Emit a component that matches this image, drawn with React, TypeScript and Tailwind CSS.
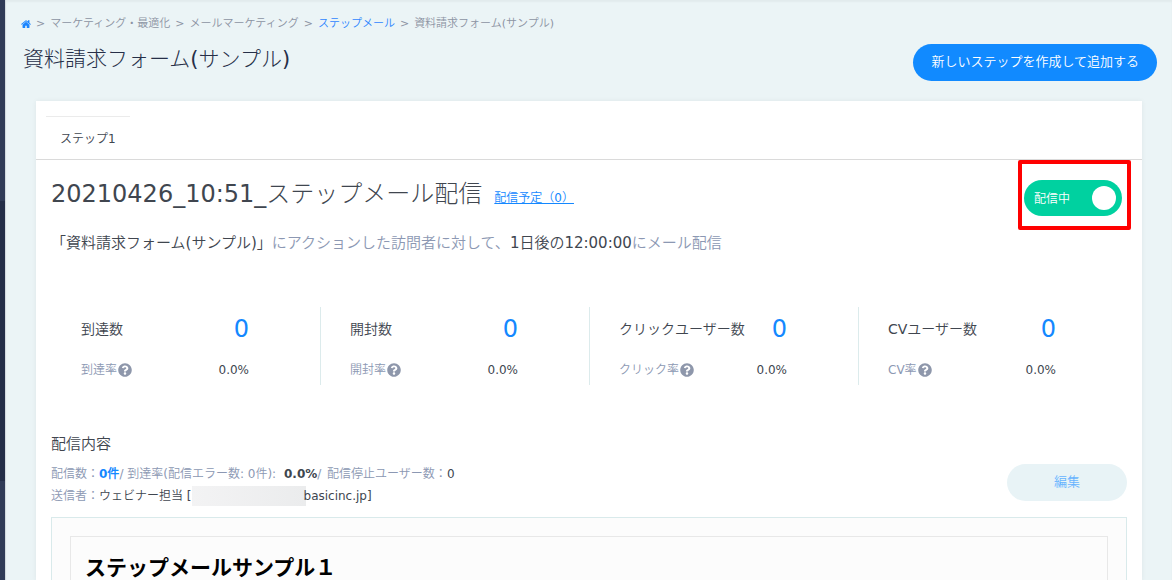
import { useState } from "react";
import { FaQuestionCircle } from "react-icons/fa";

const stats = [
  { label: "到達数", count: 0, rateLabel: "到達率", rate: "0.0%" },
  { label: "開封数", count: 0, rateLabel: "開封率", rate: "0.0%" },
  { label: "クリックユーザー数", count: 0, rateLabel: "クリック率", rate: "0.0%" },
  { label: "CVユーザー数", count: 0, rateLabel: "CV率", rate: "0.0%" },
];

function Breadcrumb() {
  return (
    <nav aria-label="パンくず" className="flex items-center gap-[5px] pl-[15px] text-[11px] leading-4 text-[#8b93a3]">
      <a href="#" aria-label="ホーム" className="text-[#1a85ff]">
        <svg viewBox="0 0 1664 1312" className="h-2 w-2.5" fill="currentColor" aria-hidden="true">
          <path d="M1408 768v480q0 26-19 45t-45 19h-384v-384h-256v384h-384q-26 0-45-19t-19-45v-480q0-1 .5-3t.5-3l575-474 575 474q1 2 1 6zM1631 699l-62 74q-8 9-21 11h-3q-13 0-21-7l-692-577-692 577q-12 8-24 7-13-2-21-11l-62-74q-8-10-7-23.500t11-21.500l719-599q32-26 76-26t76 26l244 204v-195q0-14 9-23t23-9h192q14 0 23 9t9 23v408l219 182q10 8 11 21.500t-7 23.500z" />
        </svg>
      </a>
      <span>&gt;</span>
      <a href="#">マーケティング・最適化</a>
      <span>&gt;</span>
      <a href="#">メールマーケティング</a>
      <span>&gt;</span>
      <a href="#" className="text-[#2f86ff]">ステップメール</a>
      <span>&gt;</span>
      <span>資料請求フォーム(サンプル)</span>
    </nav>
  );
}

function DeliveryToggle() {
  const [on, setOn] = useState(true);
  return (
    <div className="relative mt-1 mr-[5px]">
      <label className="flex h-9 w-[98px] cursor-pointer items-center justify-between rounded-full bg-[#00d1a0] pr-1.5 pl-2.5 text-xs text-white">
        <input type="checkbox" role="switch" className="sr-only" checked={on} onChange={() => setOn(!on)} />
        <span className="pt-0.5">配信中</span>
        <span className="size-6 rounded-full bg-white" />
      </label>
      <div className="pointer-events-none absolute -top-5 -right-[9px] -bottom-[14px] -left-1.5 rounded-xs border-4 border-[#ff0000]" />
    </div>
  );
}

function Stats() {
  return (
    <div className="mt-[52px] grid grid-cols-4">
      {stats.map((s) => (
        <div key={s.label} className="border-l border-[#dcebec] pt-2 pr-[71px] pb-[5px] pl-[29px] first:border-transparent">
          <div className="flex items-center justify-between text-sm leading-7">
            <span className="whitespace-nowrap">{s.label}</span>
            <span className="text-2xl leading-7 text-[#1488ff]">{s.count}</span>
          </div>
          <div className="mt-[17px] flex items-center justify-between text-xs leading-5">
            <span className="flex items-center gap-px text-[#8c98b3]">
              {s.rateLabel}
              <FaQuestionCircle size={14} className="text-[#8e97ab]" />
            </span>
            <span>{s.rate}</span>
          </div>
        </div>
      ))}
    </div>
  );
}

export default function App() {
  return (
    <div className="flex h-screen overflow-hidden bg-[#ebf4f6] font-['DejaVu_Sans','Noto_Sans_CJK_JP_DemiLight','Noto_Sans_CJK_JP',sans-serif] text-[#40464f]">
      <aside className="flex w-1.5 shrink-0 flex-col border-r border-[#d3dadf] bg-[#242e48]">
        <div className="h-[201px] bg-[#303b57]" />
        <div className="mt-auto h-[99px] bg-[#303b57]" />
      </aside>
      <main className="flex min-w-0 flex-1 flex-col pt-4 shadow-[inset_0_2px_2px_rgba(0,0,0,0.04)]">
        <Breadcrumb />
        <header className="mt-3 flex items-start justify-between pr-[15px] pl-[17px]">
          <h1 className="font-['DejaVu_Sans','Noto_Sans_CJK_JP_Light','Noto_Sans_CJK_JP',sans-serif] text-[21px] leading-[30px] text-[#262f48]">
            資料請求フォーム(サンプル)
          </h1>
          <button className="h-[37px] rounded-full bg-[#118aff] px-[18px] pb-0.5 text-[13px] text-white">
            新しいステップを作成して追加する
          </button>
        </header>
        <section className="mx-[30px] mt-5 flex flex-1 flex-col bg-white shadow-[0_0_5px_rgba(0,0,0,0.06)]">
          <div className="flex border-b border-[#dadada] px-2.5 pt-[15px]">
            <button className="border-t border-[#ebebeb] px-3.5 pt-0.5 text-xs leading-10">ステップ1</button>
          </div>
          <div className="flex flex-1 flex-col px-[15px] pt-4">
            <div className="flex items-start justify-between">
              <div className="flex items-baseline gap-3">
                <h2 className="font-['DejaVu_Sans','Noto_Sans_CJK_JP_Light','Noto_Sans_CJK_JP',sans-serif] text-2xl leading-9">
                  20210426_10:51_ステップメール配信
                </h2>
                <a href="#" className="text-xs text-[#1488ff] underline">配信予定（0）</a>
              </div>
              <DeliveryToggle />
            </div>
            <p className="mt-[15px] text-[15px] leading-6 text-[#8c98b3]">
              <span className="text-[#40464f]">「資料請求フォーム(サンプル)」</span>にアクションした訪問者に対して、
              <span className="text-[#40464f]">1日後の12:00:00</span>にメール配信
            </p>
            <Stats />
            <h3 className="mt-[49px] text-[15px] leading-5">配信内容</h3>
            <div className="mt-2 flex items-start justify-between">
              <div className="pt-px text-xs leading-[22px] text-[#8c98b3]">
                <p>
                  配信数：<b className="text-[#1488ff]">0件</b>/ 到達率(配信エラー数: 0件):{" "}
                  <b className="ml-1 text-[#40464f]">0.0%</b>/ <span className="ml-0.5">配信停止ユーザー数：</span>
                  <span className="text-[#40464f]">0</span>
                </p>
                <p className="flex items-center">
                  送信者：
                  <span className="text-[#40464f]">ウェビナー担当 [</span>
                  <span className="h-5 w-[114px] bg-linear-to-r from-[#f3f3f4] to-[#ebeced]" />
                  <span className="-ml-0.5 text-[#40464f]">basicinc.jp]</span>
                </p>
              </div>
              <button className="mt-0.5 h-[37px] w-[120px] rounded-full bg-[#e8f3f6] pb-0.5 text-[13px] text-[#67b4ff]">編集</button>
            </div>
            <div className="mt-2.5 flex flex-1 flex-col border border-b-0 border-[#d9eaeb] bg-[#fcfcfc] px-[18px] pt-[18px]">
              <div className="flex-1 border border-b-0 border-[#e8e8e8] px-3.5 pt-3.5">
                <h4 className="font-['Noto_Sans_CJK_JP',sans-serif] text-[21px] leading-[30px] font-bold text-black">
                  ステップメールサンプル１
                </h4>
              </div>
            </div>
          </div>
        </section>
      </main>
    </div>
  );
}
